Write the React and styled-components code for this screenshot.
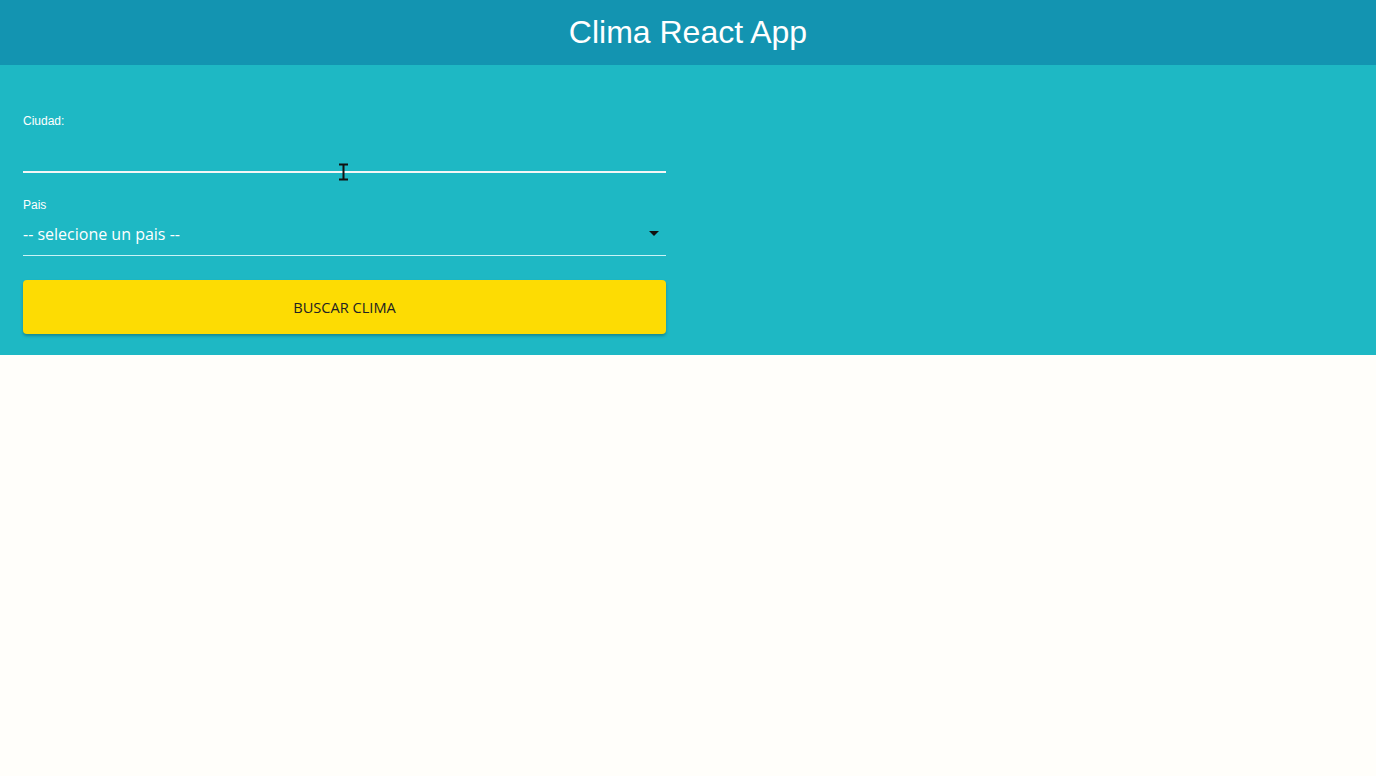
import styled, { createGlobalStyle } from "styled-components";

const GlobalStyle = createGlobalStyle`
  body{
    margin: 0;
    background-color: #fffefa;
    font-family: "Liberation Sans", Arial, sans-serif;
  }
`

const Header = styled.header`
  height: 65px;
  background-color: #1394b1;
  display: flex;
  align-items: center;
  justify-content: center;
  h1{
    margin: 0;
    color: #fff;
    font-weight: 400;
    font-size: 32px;
    font-family: "Liberation Sans", Arial, sans-serif;
  }
`

const Section = styled.section`
  background-color: #1eb8c4;
  padding: 49px 23px 21px 23px;
  position: relative;
`

const Form = styled.form`
  width: 643px;
  display: flex;
  flex-direction: column;
`

const Field = styled.div`
  display: flex;
  flex-direction: column;
  margin-bottom: ${p => p.$gap || 0}px;
`

const Label = styled.label`
  color: #fff;
  font-size: 12px;
  font-family: "Liberation Sans", Arial, sans-serif;
  line-height: 14px;
`

const Input = styled.input`
  background: none;
  border: none;
  border-bottom: 2px solid #f4f6f6;
  outline: none;
  height: 45px;
  padding: 0;
  font-size: 16px;
  color: #fff;
  caret-color: #b2ebf2;
  box-sizing: border-box;
`

const SelectWrap = styled.div`
  position: relative;
  display: flex;
  span{
    position: absolute;
    right: 7px;
    top: 19px;
    pointer-events: none;
    width: 0;
    height: 0;
    border-left: 5px solid transparent;
    border-right: 5px solid transparent;
    border-top: 5px solid #111;
  }
`

const Select = styled.select`
  width: 100%;
  appearance: none;
  -webkit-appearance: none;
  background: none;
  border: none;
  border-bottom: 1px solid #c9f3f6;
  outline: none;
  height: 44px;
  padding: 0;
  color: #fff;
  font-family: "Open Sans", "Noto Sans", sans-serif;
  font-size: 16px;
  option{
    color: #333;
  }
`

const Button = styled.button`
  height: 54px;
  border: none;
  border-radius: 4px;
  background-color: #fddc03;
  color: #222;
  font-family: "Open Sans", "Noto Sans", sans-serif;
  font-size: 14.6px;
  text-transform: uppercase;
  box-shadow: 0 2px 3px rgba(0, 0, 0, 0.25);
  cursor: pointer;
`

const Cursor = styled.svg`
  position: absolute;
  left: 338px;
  top: 98px;
`

export default function App() {
  return (
    <>
      <GlobalStyle />
      <Header>
        <h1>Clima React App</h1>
      </Header>
      <Section>
        <Form onSubmit={e => e.preventDefault()}>
          <Field $gap={25}>
            <Label htmlFor="ciudad">Ciudad:</Label>
            <Input id="ciudad" type="text" />
          </Field>
          <Field $gap={24}>
            <Label htmlFor="pais">Pais</Label>
            <SelectWrap>
              <Select id="pais" defaultValue="">
                <option value="">-- selecione un pais --</option>
                <option value="US">Estados Unidos</option>
                <option value="MX">México</option>
                <option value="AR">Argentina</option>
              </Select>
              <span />
            </SelectWrap>
          </Field>
          <Button type="submit">Buscar Clima</Button>
        </Form>
        <Cursor width="11" height="18" viewBox="0 0 11 18">
          <path d="M1 1.5h9M1 16.5h9M5.5 1.5v15" stroke="#111" strokeWidth="2" fill="none" />
        </Cursor>
      </Section>
    </>
  )
}
